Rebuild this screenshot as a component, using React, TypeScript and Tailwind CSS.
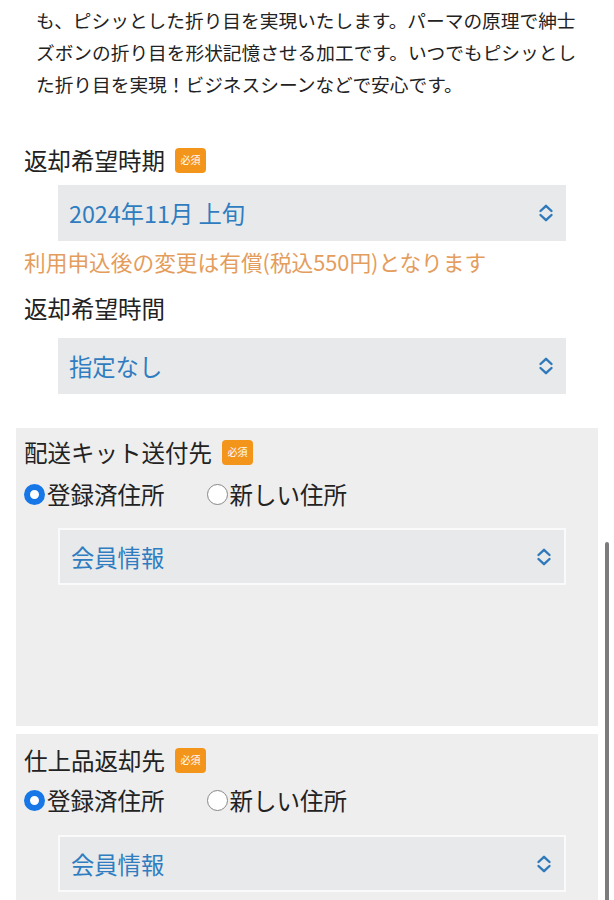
import React from "react";

const font = { fontFamily: '"Noto Sans CJK JP", "Noto Sans", sans-serif' };

function Chevron() {
  return (
    <svg width="16" height="20" viewBox="0 0 16 20" fill="none">
      <path d="M2.5 8 L8 2.8 L13.5 8" stroke="#2f79ba" strokeWidth="2.4" strokeLinecap="round" strokeLinejoin="round" />
      <path d="M2.5 12 L8 17.2 L13.5 12" stroke="#2f79ba" strokeWidth="2.4" strokeLinecap="round" strokeLinejoin="round" />
    </svg>
  );
}

function Select({ text, bordered, className }: { text: string; bordered?: boolean; className?: string }) {
  return (
    <div
      className={`flex items-center justify-between w-[508px] h-[56px] bg-[#e8e9eb] pl-[11px] pr-[12px] ${
        bordered ? "border-2 border-[#fafafa]" : ""
      } ${className ?? ""}`}
    >
      <span className="text-[23.3px] leading-[30px] text-[#2f7dc0]">{text}</span>
      <Chevron />
    </div>
  );
}

function Badge() {
  return (
    <span className="inline-flex items-center justify-center w-[31px] h-[25px] rounded-[4px] bg-[#f3941b] text-white text-[10px] leading-none ml-[10px]">
      必須
    </span>
  );
}

function Radio({ checked, label }: { checked: boolean; label: string }) {
  return (
    <div className="flex items-center">
      {checked ? (
        <span className="w-[21px] h-[21px] rounded-full border-[6px] border-[#1877e6] bg-white" />
      ) : (
        <span className="w-[21px] h-[21px] rounded-full border-[1.5px] border-[#888] bg-white" />
      )}
      <span className="ml-[2px] text-[23.5px] leading-[30px] text-[#222]">{label}</span>
    </div>
  );
}

export default function App() {
  return (
    <div className="relative w-[614px] h-[900px] bg-white overflow-hidden" style={font}>
      <p className="pl-[36px] mt-[4px] text-[18.7px] leading-[32px] text-[#222] whitespace-nowrap">
        も、ピシッとした折り目を実現いたします。パーマの原理で紳士
        <br />
        ズボンの折り目を形状記憶させる加工です。いつでもピシッとし
        <br />
        た折り目を実現！ビジネスシーンなどで安心です。
      </p>

      <div className="pl-[24px] mt-[44px] flex items-center h-[32px]">
        <span className="text-[23.5px] leading-[32px] text-[#222]">返却希望時期</span>
        <Badge />
      </div>
      <Select text="2024年11月 上旬" className="ml-[58px] mt-[9px]" />
      <div className="pl-[24px] mt-[6px] text-[21.7px] leading-[30px] text-[#e49d5c]">
        利用申込後の変更は有償(税込550円)となります
      </div>
      <div className="pl-[24px] mt-[15px] text-[23.5px] leading-[32px] text-[#222]">返却希望時間</div>
      <Select text="指定なし" className="ml-[58px] mt-[14px]" />

      <div className="ml-[16px] mt-[34px] w-[582px] h-[298px] bg-[#eeeeee] pl-[8px] pt-[8px]">
        <div className="flex items-center h-[32px]">
          <span className="text-[23.5px] leading-[32px] text-[#222]">配送キット送付先</span>
          <Badge />
        </div>
        <div className="flex items-center gap-[42px] mt-[11px] h-[30px]">
          <Radio checked label="登録済住所" />
          <Radio checked={false} label="新しい住所" />
        </div>
        <Select text="会員情報" bordered className="ml-[34px] mt-[19px] h-[57px]" />
      </div>

      <div className="ml-[16px] mt-[8px] w-[582px] h-[200px] bg-[#eeeeee] pl-[8px] pt-[10px]">
        <div className="flex items-center h-[32px]">
          <span className="text-[23.5px] leading-[32px] text-[#222]">仕上品返却先</span>
          <Badge />
        </div>
        <div className="flex items-center gap-[42px] mt-[9px] h-[30px]">
          <Radio checked label="登録済住所" />
          <Radio checked={false} label="新しい住所" />
        </div>
        <Select text="会員情報" bordered className="ml-[34px] mt-[20px] h-[57px]" />
      </div>

      <div className="absolute left-[605px] top-[542px] w-[4px] h-[380px] rounded-full bg-[#7c7c7c]" />
    </div>
  );
}
